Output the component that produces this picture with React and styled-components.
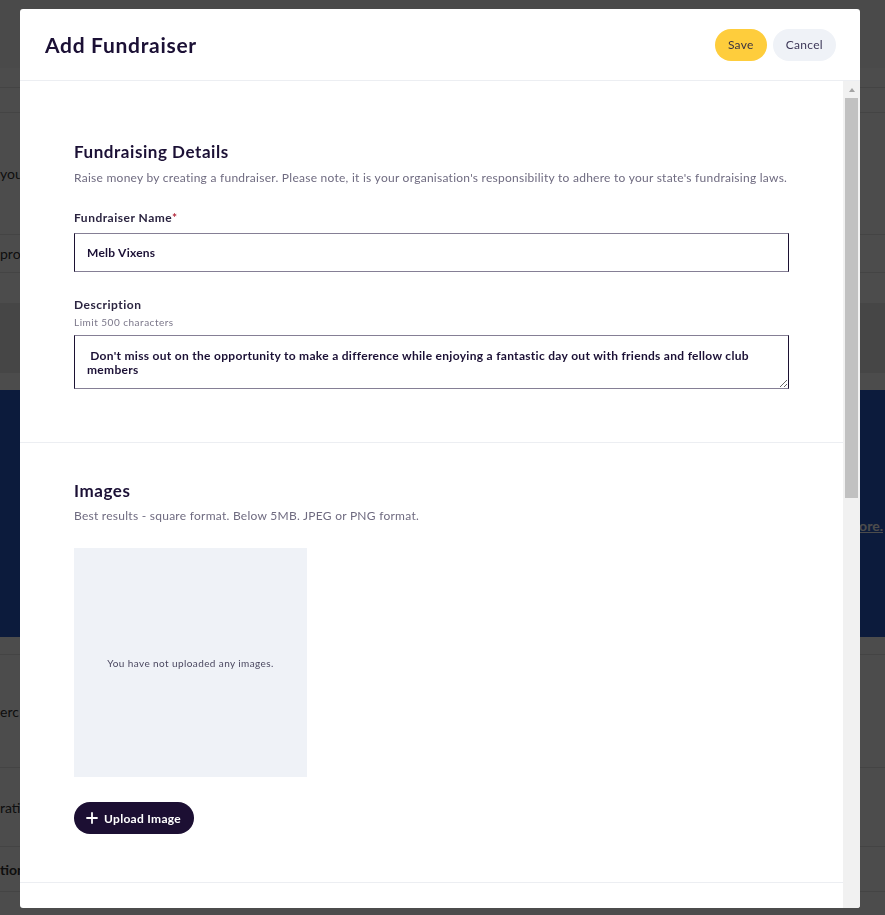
import React from 'react'
import styled, { createGlobalStyle } from 'styled-components'

const GlobalStyle = createGlobalStyle`
  html, body {
    margin: 0;
    padding: 0;
  }
  body {
    font-family: Lato, "Noto Sans", sans-serif;
    background: #fff;
    overflow: hidden;
  }
  * {
    box-sizing: border-box;
  }
`

// ---- page behind the dialog ----

const Page = styled.div`
  height: 915px;
  overflow: hidden;
  background: #fff;
  display: flex;
  flex-direction: column;
`

const PageRow = styled.div`
  height: ${p => p.$h}px;
  flex-shrink: 0;
  display: flex;
  align-items: center;
  background: ${p => p.$bg || '#fff'};
  border-bottom: ${p => (p.$line ? '1px solid #e3e3e3' : 'none')};
  font-size: 14px;
  font-weight: ${p => (p.$bold ? 700 : 400)};
  color: #333;
  white-space: nowrap;
  overflow: hidden;
`

const Banner = styled.div`
  height: 247px;
  flex-shrink: 0;
  padding-top: 24px;
  background: rgb(40, 90, 200);
  display: flex;
  align-items: center;
  justify-content: flex-end;
`

const BannerLink = styled.a`
  color: #fff;
  font-weight: 700;
  font-size: 14px;
  text-decoration: underline;
  margin-right: 2px;
`

const Overlay = styled.div`
  position: fixed;
  inset: 0;
  background: rgba(0, 0, 0, 0.7);
`

// ---- dialog ----

const Modal = styled.div`
  position: fixed;
  left: 20px;
  top: 9px;
  width: 840px;
  height: 899px;
  background: #fff;
  border-radius: 3px;
  display: flex;
  flex-direction: column;
  overflow: hidden;
`

const Header = styled.header`
  height: 72px;
  flex-shrink: 0;
  display: flex;
  align-items: center;
  justify-content: space-between;
  padding: 0 24px 0 25px;
  border-bottom: 1px solid #eceef2;
`

const Title = styled.h1`
  margin: 0;
  font-size: 21px;
  font-weight: 700;
  letter-spacing: 0.7px;
  color: #1b1035;
`

const Actions = styled.div`
  display: flex;
  gap: 6px;
`

const Button = styled.button`
  height: 32px;
  padding: 0 13px;
  border: none;
  border-radius: 16px;
  font-family: inherit;
  font-size: 12px;
  letter-spacing: 0.3px;
  color: ${p => (p.$primary ? '#3a3342' : '#3d3858')};
  background: ${p => (p.$primary ? '#fecd3c' : '#eff2f7')};
  cursor: pointer;
`

const BodyRow = styled.div`
  flex: 1;
  min-height: 0;
  display: flex;
`

const Content = styled.div`
  flex: 1;
  overflow: hidden;
`

const Section = styled.section`
  padding: ${p => p.$top}px 54px ${p => p.$bottom}px;
  border-bottom: 1px solid #eceef2;
`

const SectionTitle = styled.h2`
  margin: 0;
  font-size: 17px;
  line-height: 20px;
  font-weight: 700;
  letter-spacing: 0.55px;
  color: #1b1035;
`

const SectionText = styled.p`
  margin: ${p => p.$mt || 8}px 0 0;
  font-size: 12px;
  line-height: 16px;
  letter-spacing: 0.26px;
  color: #6f6b80;
`

const Label = styled.label`
  display: block;
  margin-top: ${p => p.$mt}px;
  font-size: 12px;
  line-height: 16px;
  font-weight: 700;
  letter-spacing: 0.5px;
  color: #2b2440;
`

const Required = styled.span`
  color: #b3263a;
`

const Hint = styled.div`
  margin-top: 2px;
  font-size: 10px;
  line-height: 14px;
  letter-spacing: 0.5px;
  color: #7a7689;
`

const TextInput = styled.input`
  display: block;
  width: 100%;
  height: 39px;
  margin-top: 7px;
  padding: 0 12px;
  border: 1px solid;
  border-color: #857f95 #1c1233;
  border-radius: 0;
  font-family: inherit;
  font-size: 12px;
  font-weight: 700;
  letter-spacing: 0.25px;
  color: #1b1035;
  outline: none;
`

const TextArea = styled.textarea`
  display: block;
  width: 100%;
  height: 54px;
  margin-top: 6px;
  padding: 13px 12px 0;
  border: 1px solid;
  border-color: #857f95 #1c1233;
  border-radius: 0;
  font-family: inherit;
  font-size: 12px;
  line-height: 14px;
  font-weight: 700;
  letter-spacing: 0.3px;
  color: #1b1035;
  resize: vertical;
  outline: none;
`

const ImageBox = styled.div`
  width: 233px;
  height: 229px;
  margin-top: 24px;
  background: #eff2f7;
  display: flex;
  align-items: center;
  justify-content: center;
  font-size: 10px;
  letter-spacing: 0.4px;
  color: #4b4860;
`

const UploadButton = styled.button`
  margin-top: 25px;
  height: 32px;
  padding: 0 13px 0 12px;
  display: inline-flex;
  align-items: center;
  gap: 6px;
  border: none;
  border-radius: 16px;
  background: #1c0f33;
  color: #fff;
  font-family: inherit;
  font-size: 12px;
  font-weight: 700;
  letter-spacing: 0.3px;
  cursor: pointer;
`

const Scrollbar = styled.div`
  width: 17px;
  flex-shrink: 0;
  background: #f1f1f1;
  display: flex;
  flex-direction: column;
  align-items: center;
`

const ScrollArrow = styled.div`
  height: 17px;
  display: flex;
  align-items: center;
  justify-content: center;

  &::before {
    content: '';
    border-left: 3.5px solid transparent;
    border-right: 3.5px solid transparent;
    border-bottom: 4px solid #a3a3a3;
  }
`

const Thumb = styled.div`
  width: 13px;
  height: 400px;
  background: #c1c1c1;
`

const PlusIcon = () => (
  <svg width="12" height="12" viewBox="0 0 12 12" fill="none" stroke="#fff" strokeWidth="1.8" strokeLinecap="round">
    <path d="M6 1v10M1 6h10" />
  </svg>
)

const App = () => {
  return (
    <>
      <GlobalStyle />
      <Page>
        <PageRow $h={68} $bg="#f7f7f7" />
        <PageRow $h={20} $line />
        <PageRow $h={25} $line />
        <PageRow $h={122} $line>you</PageRow>
        <PageRow $h={38} $line>prod</PageRow>
        <PageRow $h={30} />
        <PageRow $h={70} $bg="#ececec" />
        <PageRow $h={17} />
        <Banner>
          <BannerLink>More.</BannerLink>
        </Banner>
        <PageRow $h={18} $line />
        <PageRow $h={113} $line>erc</PageRow>
        <PageRow $h={79} $line>ratio</PageRow>
        <PageRow $h={45} $line $bold>tion</PageRow>
      </Page>
      <Overlay />
      <Modal>
        <Header>
          <Title>Add Fundraiser</Title>
          <Actions>
            <Button $primary>Save</Button>
            <Button>Cancel</Button>
          </Actions>
        </Header>
        <BodyRow>
          <Content>
            <Section $top={61} $bottom={53}>
              <SectionTitle>Fundraising Details</SectionTitle>
              <SectionText>
                Raise money by creating a fundraiser. Please note, it is your organisation's responsibility to adhere to your state's fundraising laws.
              </SectionText>
              <Label $mt={24}>
                Fundraiser Name<Required>*</Required>
              </Label>
              <TextInput defaultValue="Melb Vixens" />
              <Label $mt={25}>Description</Label>
              <Hint>Limit 500 characters</Hint>
              <TextArea defaultValue=" Don't miss out on the opportunity to make a difference while enjoying a fantastic day out with friends and fellow club members" />
            </Section>
            <Section $top={38} $bottom={48}>
              <SectionTitle>Images</SectionTitle>
              <SectionText $mt={7}>Best results - square format. Below 5MB. JPEG or PNG format.</SectionText>
              <ImageBox>You have not uploaded any images.</ImageBox>
              <UploadButton>
                <PlusIcon />
                Upload Image
              </UploadButton>
            </Section>
          </Content>
          <Scrollbar>
            <ScrollArrow />
            <Thumb />
          </Scrollbar>
        </BodyRow>
      </Modal>
    </>
  )
}

export default App
